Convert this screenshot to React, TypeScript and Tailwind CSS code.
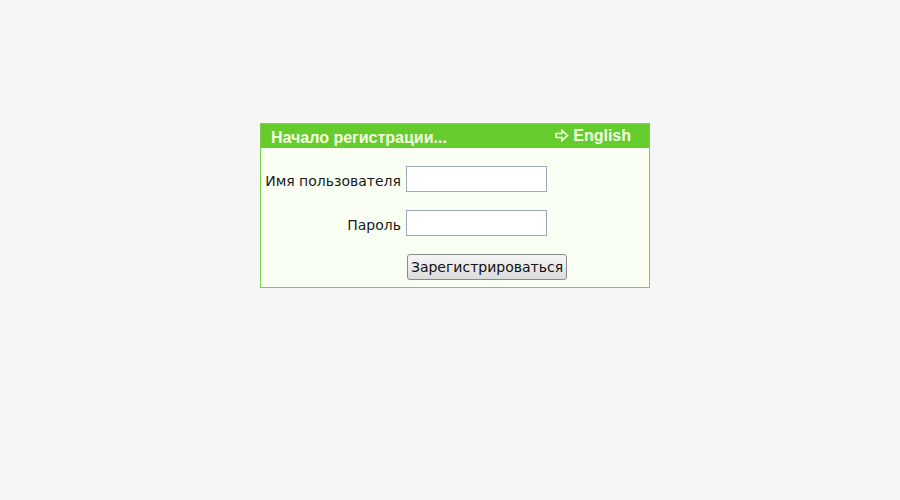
import React from "react";

export default function App() {
  return (
    <div className="w-[900px] h-[500px] bg-[#f6f6f6] pt-[123px] pl-[260px]" style={{ fontFamily: '"DejaVu Sans", Verdana, sans-serif' }}>
      <div className="w-[390px] h-[165px] border border-[#7dcf45] bg-[#f9fff3] flex flex-col">
        <div className="h-[24px] bg-[#66cc2e] flex items-center justify-between pl-[10px] pr-[18px]">
          <span className="font-bold text-[#f4ffe0] mt-[4px]" style={{ fontFamily: '"Liberation Sans", Arial, sans-serif', fontSize: 16 }}>Начало регистрации...</span>
          <span className="flex items-center gap-[4px] text-[16px] font-bold text-[#f4ffe0] mb-[1px]" style={{ fontFamily: '"Liberation Sans", Arial, sans-serif' }}>
            <svg width="14" height="13" viewBox="0 0 14 13" fill="none" stroke="#f4ffe0" strokeWidth="1.6" strokeLinejoin="miter">
              <path d="M1 4.5 H7 V1.5 L12.5 6.5 L7 11.5 V8.5 H1 Z" />
            </svg>
            English
          </span>
        </div>
        <div className="flex flex-col pt-[18px]">
          <div className="flex items-center h-[26px]">
            <div className="w-[145px] text-right pr-[5px] text-[14px] text-[#1a1a1a] mt-[4px]">Имя пользователя</div>
            <div className="w-[141px] h-[26px] border border-[#9aaab6] bg-white" />
          </div>
          <div className="flex items-center h-[26px] mt-[18px]">
            <div className="w-[145px] text-right pr-[5px] text-[14px] text-[#1a1a1a] mt-[4px]">Пароль</div>
            <div className="w-[141px] h-[26px] border border-[#9aaab6] bg-white" />
          </div>
          <div className="flex items-center h-[26px] mt-[18px]">
            <div className="w-[146px]" />
            <button className="w-[160px] h-[26px] border border-[#8a8a8a] rounded-[3px] bg-gradient-to-b from-[#f6f6f6] to-[#dcdcdc] text-[14px] text-[#111] flex items-center justify-center">Зарегистрироваться</button>
          </div>
        </div>
      </div>
    </div>
  );
}
